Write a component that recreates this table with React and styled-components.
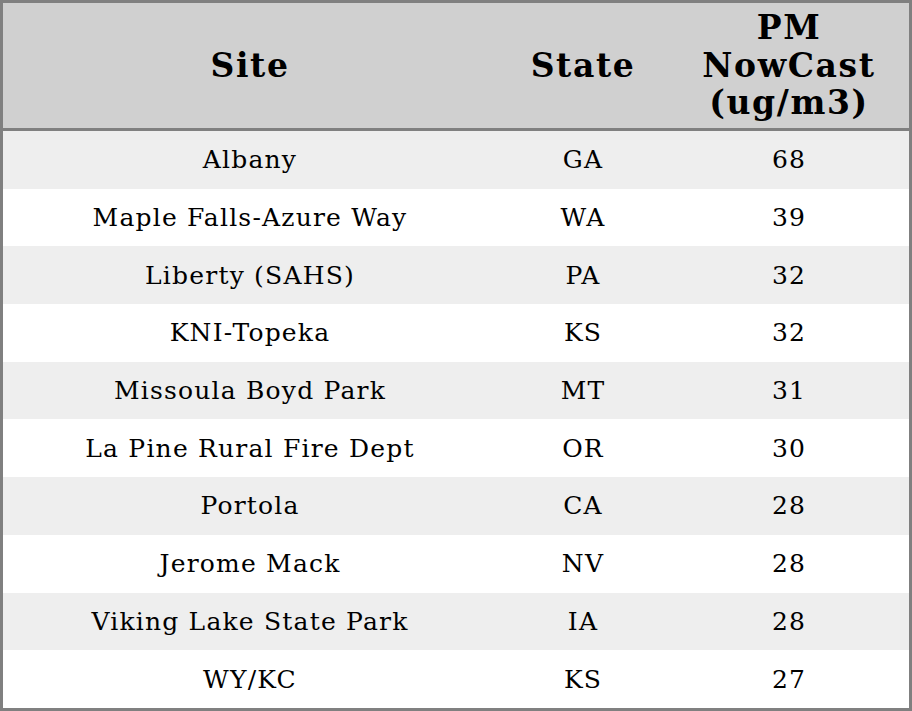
import React from 'react';
import styled, { createGlobalStyle } from 'styled-components';

const GlobalStyle = createGlobalStyle`
  html, body {
    margin: 0;
    padding: 0;
    background: #ffffff;
  }
`;

const Table = styled.table`
  width: 912px;
  height: 711px;
  border: 3px solid #808080;
  border-spacing: 0;
  table-layout: fixed;
  box-sizing: border-box;
  font-family: "DejaVu Serif", "Liberation Serif", serif;
  color: #000;
`;

const HeadCell = styled.th`
  height: 125px;
  padding: 0 4px;
  background: #d0d0d0;
  border-bottom: 3px solid #808080;
  font-size: 33px;
  font-weight: bold;
  letter-spacing: 1.6px;
  text-align: center;
  vertical-align: middle;
  line-height: 37.5px;
`;

const Row = styled.tr`
  background: ${p => (p.$shaded ? '#eeeeee' : '#ffffff')};
`;

const Cell = styled.td`
  padding: 0;
  font-size: 25px;
  letter-spacing: 1.2px;
  text-align: center;
  vertical-align: middle;
`;

const rows = [
  ['Albany', 'GA', 68],
  ['Maple Falls-Azure Way', 'WA', 39],
  ['Liberty (SAHS)', 'PA', 32],
  ['KNI-Topeka', 'KS', 32],
  ['Missoula Boyd Park', 'MT', 31],
  ['La Pine Rural Fire Dept', 'OR', 30],
  ['Portola', 'CA', 28],
  ['Jerome Mack', 'NV', 28],
  ['Viking Lake State Park', 'IA', 28],
  ['WY/KC', 'KS', 27],
];

export default function App() {
  return (
    <>
      <GlobalStyle />
      <Table>
        <colgroup>
          <col style={{ width: 494 }} />
          <col style={{ width: 172 }} />
          <col style={{ width: 240 }} />
        </colgroup>
        <thead>
          <tr>
            <HeadCell>Site</HeadCell>
            <HeadCell>State</HeadCell>
            <HeadCell>PM NowCast (ug/m3)</HeadCell>
          </tr>
        </thead>
        <tbody>
          {rows.map((r, i) => (
            <Row key={r[0]} $shaded={i % 2 === 0}>
              <Cell>{r[0]}</Cell>
              <Cell>{r[1]}</Cell>
              <Cell>{r[2]}</Cell>
            </Row>
          ))}
        </tbody>
      </Table>
    </>
  );
}
